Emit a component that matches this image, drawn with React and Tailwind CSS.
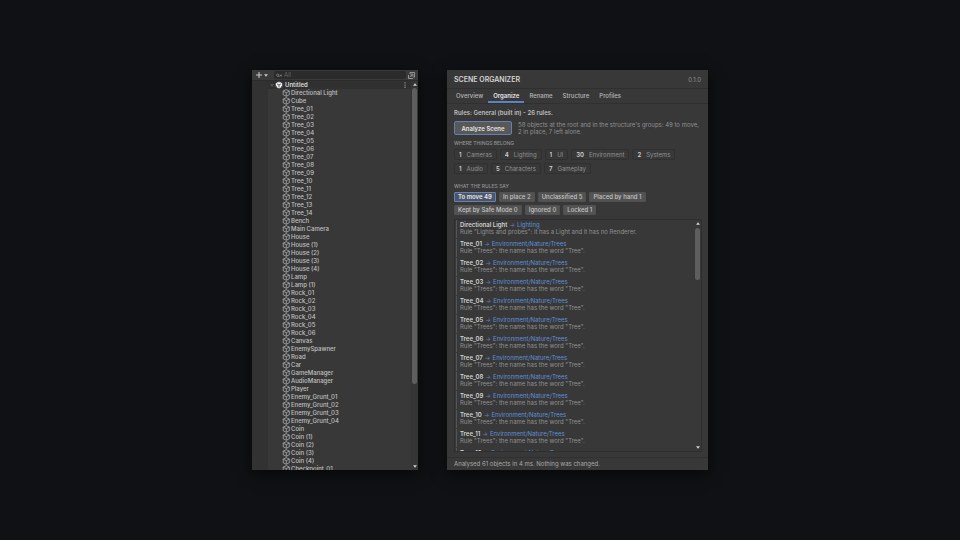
import React from "react";

const pad = (n) => String(n).padStart(2, "0");
const series = (name, count) => Array.from({ length: count }, (_, i) => `${name}_${pad(i + 1)}`);
const copies = (name, count) => [name, ...Array.from({ length: count }, (_, i) => `${name} (${i + 1})`)];

const objects = [
  "Directional Light",
  "Cube",
  ...series("Tree", 14),
  "Bench",
  "Main Camera",
  ...copies("House", 4),
  ...copies("Lamp", 1),
  ...series("Rock", 6),
  "Canvas",
  "EnemySpawner",
  "Road",
  "Car",
  "GameManager",
  "AudioManager",
  "Player",
  ...series("Enemy_Grunt", 4),
  ...copies("Coin", 4),
  "Checkpoint_01",
];

const tabs = ["Overview", "Organize", "Rename", "Structure", "Profiles"];

const groups = [
  [1, "Cameras"],
  [4, "Lighting"],
  [1, "UI"],
  [30, "Environment"],
  [2, "Systems"],
  [1, "Audio"],
  [5, "Characters"],
  [7, "Gameplay"],
];

const filters = [
  "To move 49",
  "In place 2",
  "Unclassified 5",
  "Placed by hand 1",
  "Kept by Safe Mode 0",
  "Ignored 0",
  "Locked 1",
];

const moves = [
  {
    name: "Directional Light",
    path: "Lighting",
    rule: 'Rule "Lights and probes": it has a Light and it has no Renderer.',
  },
  ...series("Tree", 12).map((name) => ({
    name,
    path: "Environment/Nature/Trees",
    rule: 'Rule "Trees": the name has the word "Tree".',
  })),
];

function CubeIcon() {
  return (
    <svg viewBox="0 0 16 16" className="size-2 shrink-0" fill="none" stroke="#b4b4b4" strokeWidth="1.5" strokeLinejoin="round" aria-hidden="true">
      <path d="M8.5 1.2 14.6 4.2V11.4L8.5 14.6 2.4 11.4V4.2Z" />
      <path d="M2.4 4.2 8.5 7.4 14.6 4.2M8.5 7.4V14.6" />
    </svg>
  );
}

function SceneIcon() {
  return (
    <svg viewBox="0 0 16 16" className="size-2 shrink-0" aria-hidden="true">
      <path d="M8 .8 14.4 4.4V11.6L8 15.2 1.6 11.6V4.4Z" fill="#f4f4f4" />
      <path d="M8 8V13M8 8 3.8 5.6M8 8 12.2 5.6" stroke="#303030" strokeWidth="1.5" />
      <path d="M8 .8V3.4M1.6 11.6 4 10.3M14.4 11.6 12 10.3" stroke="#303030" strokeWidth="1.5" />
    </svg>
  );
}

function Arrow({ up = false, className = "" }) {
  return (
    <svg viewBox="0 0 8 5" className={`h-[3px] w-[4px] shrink-0 ${className}`} fill="currentColor" aria-hidden="true">
      <path d={up ? "M4 0 8 5H0Z" : "M0 0H8L4 5Z"} />
    </svg>
  );
}

function Hierarchy() {
  return (
    <section aria-label="Hierarchy" className="flex min-h-0 flex-col overflow-hidden bg-[#383838] text-[6px] leading-[8px] text-[#c0c0c0] shadow-[0_4px_14px_rgba(0,0,0,0.6)]">
      <div className="flex h-[11px] shrink-0 items-center border-b border-[#2c2c2c] bg-[#3a3a3a] pr-[3px] pl-[4px]">
        <button type="button" aria-label="Add object" className="flex items-center gap-[2px] text-[#c8c8c8]">
          <svg viewBox="0 0 8 8" className="size-[6px]" stroke="currentColor" strokeWidth="1.4" aria-hidden="true">
            <path d="M4 0V8M0 4H8" />
          </svg>
          <Arrow />
        </button>
        <label className="ml-[6px] flex h-[8px] min-w-0 flex-1 items-center gap-[2px] rounded-[2px] bg-[#2b2b2b] pl-[2px]">
          <svg viewBox="0 0 12 8" className="h-[5px] w-[6px] shrink-0" fill="none" stroke="#8f8f8f" strokeWidth="1.4" aria-hidden="true">
            <circle cx="3.4" cy="3.4" r="2.3" />
            <path d="M5 5 7.4 7.4M8 3.4H12L10 5.6Z" />
          </svg>
          <input type="text" placeholder="All" aria-label="Search objects" className="h-[8px] w-full min-w-0 bg-transparent text-[6px] leading-[8px] outline-none placeholder:text-[#686868]" />
        </label>
        <button type="button" aria-label="Open search window" className="ml-[2px] text-[#b0b0b0]">
          <svg viewBox="0 0 14 14" className="size-[7px]" fill="none" stroke="currentColor" strokeWidth="1.5" aria-hidden="true">
            <path d="M4 4V1H13V10H10M1 6V13H10" />
            <circle cx="8" cy="5.8" r="2.2" />
            <path d="M6.4 7.4 3.4 10.4" />
          </svg>
        </button>
      </div>
      <div className="flex min-h-0 flex-1">
        <div className="w-[16px] shrink-0 bg-[#323232]" />
        <div className="min-w-0 flex-1 overflow-hidden">
          <div className="flex h-[8px] items-center bg-[#303030] pr-[5px] pl-[2px] font-semibold text-[#dadada]">
            <Arrow className="mr-px text-[#5c5c5c]" />
            <SceneIcon />
            <span className="ml-[2px] flex-1">Untitled</span>
            <button type="button" aria-label="Scene menu" className="text-[#c4c4c4]">
              <svg viewBox="0 0 2 10" className="h-[6px] w-[2px]" fill="currentColor" aria-hidden="true">
                <circle cx="1" cy="1.4" r="1" />
                <circle cx="1" cy="5" r="1" />
                <circle cx="1" cy="8.6" r="1" />
              </svg>
            </button>
          </div>
          <ul className="font-medium">
            {objects.map((name) => (
              <li key={name} className="flex h-[8px] items-center gap-px pl-[14px] whitespace-nowrap">
                <CubeIcon />
                {name}
              </li>
            ))}
          </ul>
        </div>
        <div className="flex w-[7px] shrink-0 flex-col items-center bg-[#353535] pt-[2px] pb-[2px] text-[#d0d0d0]">
          <Arrow up />
          <div className="mt-[2px] flex min-h-0 w-[5px] flex-1 flex-col">
            <div className="h-[78.5%] rounded-full bg-[#5e5e5e]" />
          </div>
          <Arrow />
        </div>
      </div>
    </section>
  );
}

function SectionLabel({ children }) {
  return <h2 className="text-[5px] leading-[7px] font-medium text-[#929292]">{children}</h2>;
}

function Organizer() {
  return (
    <section aria-label="Scene Organizer" className="flex min-h-0 flex-col overflow-hidden bg-[#383838] text-[6px] leading-[7px] text-[#909090] shadow-[0_4px_14px_rgba(0,0,0,0.6)]">
      <header className="flex h-[18px] shrink-0 items-center justify-between px-[7px]">
        <h1 className="text-[7px] font-semibold text-[#d2d2d2]">SCENE ORGANIZER</h1>
        <span>0.1.0</span>
      </header>
      <nav className="flex h-[16px] shrink-0 border-y border-[#303030] pl-[4px] text-[#b8b8b8]">
        {tabs.map((tab) => (
          <button
            key={tab}
            type="button"
            aria-current={tab === "Organize" ? "page" : undefined}
            className={`border-b-2 px-[5px] ${tab === "Organize" ? "border-[#5a82c8] font-semibold text-[#e4e4e4]" : "border-transparent font-medium"}`}
          >
            {tab}
          </button>
        ))}
      </nav>
      <div className="flex min-h-0 flex-1 flex-col py-[5px] pr-[6px] pl-[7px]">
        <p className="font-semibold text-[#bebebe]">Rules: General (built in) - 26 rules.</p>
        <div className="mt-[5px] flex items-center gap-[6px]">
          <button type="button" className="h-[14px] w-[58px] shrink-0 rounded-[2px] border border-[#6480b0] bg-[#585858] font-semibold text-[#e4e4e4]">
            Analyze Scene
          </button>
          <p>58 objects at the root and in the structure's groups: 49 to move, 2 in place, 7 left alone.</p>
        </div>
        <div className="mt-[5px]">
          <SectionLabel>WHERE THINGS BELONG</SectionLabel>
        </div>
        <ul className="mt-[2px] flex flex-wrap gap-[3px]">
          {groups.map(([count, name]) => (
            <li key={name} className="flex h-[11px] items-center gap-[5px] rounded-[2px] border border-[#303030] px-[4px]">
              <b className="font-semibold text-[#d2d2d2]">{count}</b>
              {name}
            </li>
          ))}
        </ul>
        <div className="mt-[9px]">
          <SectionLabel>WHAT THE RULES SAY</SectionLabel>
        </div>
        <div className="mt-[2px] flex flex-wrap gap-[3px]">
          {filters.map((label, i) => (
            <button
              key={label}
              type="button"
              aria-pressed={i === 0}
              className={`h-[10px] rounded-[1px] border px-[3px] leading-[8px] ${i === 0 ? "border-[#6482b4] bg-[#4c5669] font-semibold text-[#e8e8e8]" : "border-[#505050] bg-[#535353] font-medium text-[#c4c4c4]"}`}
            >
              {label}
            </button>
          ))}
        </div>
        <div className="mt-[4px] flex min-h-0 flex-1 border border-[#2e2e2e] pl-px">
          <ul className="min-w-0 flex-1 overflow-hidden">
            {moves.map(({ name, path, rule }) => (
              <li key={name} className="mb-px h-[18px] border-l border-[#555555] pt-px pl-[3px] whitespace-nowrap">
                <p className="flex gap-[2px]">
                  <b className="font-semibold text-[#d2d2d2]">{name}</b>
                  <span className="text-[#5a82c0]">→</span>
                  <a href="#" className="text-[#6090d8]">{path}</a>
                </p>
                <p>{rule}</p>
              </li>
            ))}
          </ul>
          <div className="flex w-[7px] shrink-0 flex-col items-center py-[2px] text-[#d0d0d0]">
            <Arrow up />
            <div className="mt-[3px] flex min-h-0 w-[5px] flex-1 flex-col">
              <div className="h-[24%] rounded-full bg-[#5e5e5e]" />
            </div>
            <Arrow />
          </div>
        </div>
      </div>
      <footer className="flex h-[13px] shrink-0 items-center border-t border-[#303030] px-[7px] pb-px text-[#a8a8a8]">
        Analysed 61 objects in 4 ms. Nothing was changed.
      </footer>
    </section>
  );
}

export default function App() {
  return (
    <main className="h-screen bg-[#0f1114] py-[70px] font-['Inter',sans-serif]">
      <div className="mx-auto grid h-full w-full max-w-[456px] grid-cols-[166fr_261fr] grid-rows-[minmax(0,1fr)] gap-[29px]">
        <Hierarchy />
        <Organizer />
      </div>
    </main>
  );
}
